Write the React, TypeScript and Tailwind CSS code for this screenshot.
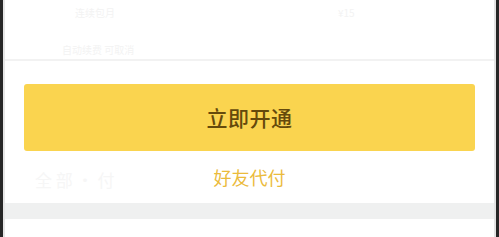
export default function App() {
  return (
    <div className="flex h-[237px] w-[499px] overflow-hidden bg-white font-['Noto_Sans_CJK_SC',sans-serif]">
      <div className="w-[3px] shrink-0 bg-[#262626]" />
      <div className="w-[2px] shrink-0 bg-[#e6e6e6]" />
      <div className="flex min-w-0 flex-1 flex-col">
        {/* faded header rows */}
        <div className="relative h-[61px] shrink-0 border-b-2 border-[#f2f2f2] text-[10px] text-[#f3f3f3]">
          <span className="absolute left-[70px] top-[5px]">连续包月</span>
          <span className="absolute left-[333px] top-[5px]">¥15</span>
          <span className="absolute left-[57px] top-[42px]">自动续费 可取消</span>
        </div>
        <div className="px-[19px] pt-[23px]">
          <button className="flex h-[67px] w-full items-center justify-center rounded-[3px] bg-[#fad44f] text-[21px] font-medium tracking-[0.5px] text-[#654a0c]">
            立即开通
          </button>
        </div>
        <div className="relative flex h-[52px] items-center justify-center">
          <span className="absolute left-[30px] top-[16px] text-[17px] text-[#f6f6f6]">全 部 ・ 付</span>
          <span className="relative text-[18px] text-[#ebbb3c]">好友代付</span>
        </div>
        <div className="h-[16px] shrink-0 bg-[#eff0f0]" />
        <div className="flex-1 bg-white" />
      </div>
      <div className="w-[2px] shrink-0 bg-[#e3e3e3]" />
      <div className="w-[3px] shrink-0 bg-[#262626]" />
    </div>
  );
}
